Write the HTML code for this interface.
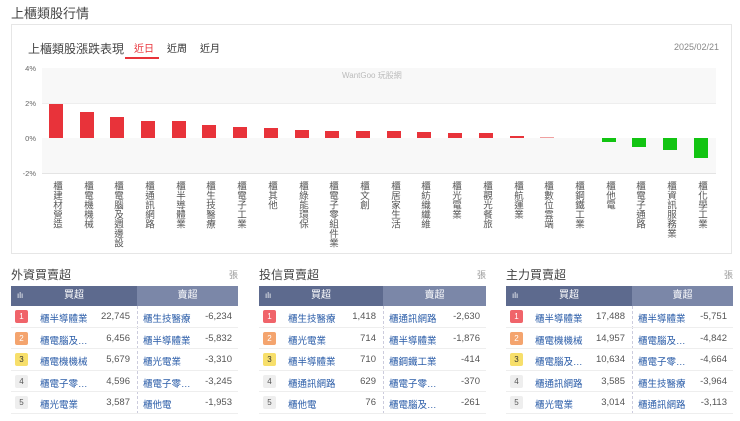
<!DOCTYPE html>
<html><head><meta charset="utf-8"><style>
*{margin:0;padding:0;box-sizing:border-box}
body{width:740px;height:421px;background:#fff;font-family:"Liberation Sans","Noto Sans CJK TC",sans-serif;color:#333;position:relative;overflow:hidden}
.a{position:absolute}
.bar{position:absolute;width:14px;background:#e8333a}
.g{background:#12c412}
.lb{position:absolute;top:181px;writing-mode:vertical-rl;font-size:9.5px;line-height:10px;color:#555;width:10px}
.yl{position:absolute;right:704px;font-size:7.5px;color:#666}
.tb{position:absolute;top:286px;width:227px;height:128px;font-size:9.5px}
.hd{position:absolute;top:0;height:20px;color:#fff;font-size:10px;line-height:20px;text-align:center}
.row{position:absolute;left:0;width:100%;height:21.5px;border-bottom:1px solid #eee}
.nb{position:absolute;left:4px;top:4px;width:13px;height:13px;font-size:8px;line-height:13px;text-align:center;color:#fff;border-radius:2px}
.n1{position:absolute;left:29px;top:5px;color:#2a5ca8}
.v1{position:absolute;right:108px;top:5px;color:#555;text-align:right}
.n2{position:absolute;left:132px;top:5px;color:#2a5ca8}
.v2{position:absolute;right:6px;top:5px;color:#555;text-align:right}
.tt{position:absolute;top:266px;font-size:12px;color:#444}
.zh{position:absolute;top:268px;font-size:9px;color:#999}
</style></head><body>
<div class="a" style="left:11px;top:3px;font-size:13px;color:#444">上櫃類股行情</div>
<div class="a" style="left:11px;top:24px;width:721px;height:230px;border:1px solid #e6e6e6"></div>
<div class="a" style="left:28px;top:40px;font-size:12px;color:#444">上櫃類股漲跌表現</div>
<div class="a" style="left:134px;top:40px;font-size:10px;color:#e8333a">近日</div>
<div class="a" style="left:125px;top:57px;width:34px;height:2px;background:#e8333a"></div>
<div class="a" style="left:167px;top:40px;font-size:10px;color:#333">近周</div>
<div class="a" style="left:200px;top:40px;font-size:10px;color:#333">近月</div>
<div class="a" style="left:674px;top:42px;font-size:9px;color:#888">2025/02/21</div>
<div class="a" style="left:42px;top:68px;width:674px;height:35px;background:#f8f8f8"></div>
<div class="a" style="left:42px;top:138px;width:674px;height:35px;background:#f8f8f8"></div>
<div class="a" style="left:42px;top:103px;width:674px;height:1px;background:#eee"></div>
<div class="a" style="left:42px;top:173px;width:674px;height:1px;background:#e4e4e4"></div>
<div class="a" style="left:342px;top:70px;font-size:8px;color:#bbb">WantGoo 玩股網</div>
<div class="yl" style="top:64px">4%</div>
<div class="yl" style="top:99px">2%</div>
<div class="yl" style="top:134px">0%</div>
<div class="yl" style="top:169px">-2%</div>
<div class="bar" style="left:49px;top:104px;height:34px"></div>
<div class="bar" style="left:80px;top:112px;height:26px"></div>
<div class="bar" style="left:110px;top:117px;height:21px"></div>
<div class="bar" style="left:141px;top:121px;height:17px"></div>
<div class="bar" style="left:172px;top:121px;height:17px"></div>
<div class="bar" style="left:202px;top:125px;height:13px"></div>
<div class="bar" style="left:233px;top:127px;height:11px"></div>
<div class="bar" style="left:264px;top:128px;height:10px"></div>
<div class="bar" style="left:295px;top:130px;height:8px"></div>
<div class="bar" style="left:325px;top:131px;height:7px"></div>
<div class="bar" style="left:356px;top:131px;height:7px"></div>
<div class="bar" style="left:387px;top:131px;height:7px"></div>
<div class="bar" style="left:417px;top:132px;height:6px"></div>
<div class="bar" style="left:448px;top:133px;height:5px"></div>
<div class="bar" style="left:479px;top:133px;height:5px"></div>
<div class="bar" style="left:510px;top:136px;height:2px"></div>
<div class="bar" style="left:540px;top:137px;height:1px;background:#f0a0a0"></div>
<div class="bar g" style="left:602px;top:138px;height:4px"></div>
<div class="bar g" style="left:632px;top:138px;height:9px"></div>
<div class="bar g" style="left:663px;top:138px;height:12px"></div>
<div class="bar g" style="left:694px;top:138px;height:20px"></div>
<div class="lb" style="left:51px">櫃建材營造</div>
<div class="lb" style="left:82px">櫃電機機械</div>
<div class="lb" style="left:112px">櫃電腦及週邊設</div>
<div class="lb" style="left:143px">櫃通訊網路</div>
<div class="lb" style="left:174px">櫃半導體業</div>
<div class="lb" style="left:204px">櫃生技醫療</div>
<div class="lb" style="left:235px">櫃電子工業</div>
<div class="lb" style="left:266px">櫃其他</div>
<div class="lb" style="left:297px">櫃綠能環保</div>
<div class="lb" style="left:327px">櫃電子零組件業</div>
<div class="lb" style="left:358px">櫃文創</div>
<div class="lb" style="left:389px">櫃居家生活</div>
<div class="lb" style="left:419px">櫃紡織纖維</div>
<div class="lb" style="left:450px">櫃光電業</div>
<div class="lb" style="left:481px">櫃觀光餐旅</div>
<div class="lb" style="left:512px">櫃航運業</div>
<div class="lb" style="left:542px">櫃數位雲端</div>
<div class="lb" style="left:573px">櫃鋼鐵工業</div>
<div class="lb" style="left:604px">櫃他電</div>
<div class="lb" style="left:634px">櫃電子通路</div>
<div class="lb" style="left:665px">櫃資訊服務業</div>
<div class="lb" style="left:696px">櫃化學工業</div>

<div class="tt" style="left:11px">外資買賣超</div><div class="zh" style="left:229px">張</div>
<div class="tt" style="left:259px">投信買賣超</div><div class="zh" style="left:477px">張</div>
<div class="tt" style="left:506px">主力買賣超</div><div class="zh" style="left:724px">張</div>

<div class="tb" style="left:11px">
<div class="hd" style="left:0;width:126px;background:#5d6a8e"><span style="position:absolute;left:6px;font-size:8px">ılı</span>買超</div>
<div class="hd" style="left:126px;width:101px;background:#7b87a8">賣超</div>
<div class="a" style="left:126px;top:20px;height:108px;border-left:1px dashed #ccd"></div>
<div class="row" style="top:20px"><span class="nb" style="background:#f0646a">1</span><span class="n1">櫃半導體業</span><span class="v1">22,745</span><span class="n2">櫃生技醫療</span><span class="v2">-6,234</span></div>
<div class="row" style="top:41.5px"><span class="nb" style="background:#f4a46e">2</span><span class="n1">櫃電腦及…</span><span class="v1">6,456</span><span class="n2">櫃半導體業</span><span class="v2">-5,832</span></div>
<div class="row" style="top:63px"><span class="nb" style="background:#f7df6b;color:#333">3</span><span class="n1">櫃電機機械</span><span class="v1">5,679</span><span class="n2">櫃光電業</span><span class="v2">-3,310</span></div>
<div class="row" style="top:84.5px"><span class="nb" style="background:#eee;color:#555">4</span><span class="n1">櫃電子零…</span><span class="v1">4,596</span><span class="n2">櫃電子零…</span><span class="v2">-3,245</span></div>
<div class="row" style="top:106px"><span class="nb" style="background:#eee;color:#555">5</span><span class="n1">櫃光電業</span><span class="v1">3,587</span><span class="n2">櫃他電</span><span class="v2">-1,953</span></div>
</div>

<div class="tb" style="left:259px">
<div class="hd" style="left:0;width:124px;background:#5d6a8e"><span style="position:absolute;left:6px;font-size:8px">ılı</span>買超</div>
<div class="hd" style="left:124px;width:103px;background:#7b87a8">賣超</div>
<div class="a" style="left:124px;top:20px;height:108px;border-left:1px dashed #ccd"></div>
<div class="row" style="top:20px"><span class="nb" style="background:#f0646a">1</span><span class="n1">櫃生技醫療</span><span class="v1" style="right:110px">1,418</span><span class="n2" style="left:130px">櫃通訊網路</span><span class="v2">-2,630</span></div>
<div class="row" style="top:41.5px"><span class="nb" style="background:#f4a46e">2</span><span class="n1">櫃光電業</span><span class="v1" style="right:110px">714</span><span class="n2" style="left:130px">櫃半導體業</span><span class="v2">-1,876</span></div>
<div class="row" style="top:63px"><span class="nb" style="background:#f7df6b;color:#333">3</span><span class="n1">櫃半導體業</span><span class="v1" style="right:110px">710</span><span class="n2" style="left:130px">櫃鋼鐵工業</span><span class="v2">-414</span></div>
<div class="row" style="top:84.5px"><span class="nb" style="background:#eee;color:#555">4</span><span class="n1">櫃通訊網路</span><span class="v1" style="right:110px">629</span><span class="n2" style="left:130px">櫃電子零…</span><span class="v2">-370</span></div>
<div class="row" style="top:106px"><span class="nb" style="background:#eee;color:#555">5</span><span class="n1">櫃他電</span><span class="v1" style="right:110px">76</span><span class="n2" style="left:130px">櫃電腦及…</span><span class="v2">-261</span></div>
</div>

<div class="tb" style="left:506px">
<div class="hd" style="left:0;width:126px;background:#5d6a8e"><span style="position:absolute;left:6px;font-size:8px">ılı</span>買超</div>
<div class="hd" style="left:126px;width:101px;background:#7b87a8">賣超</div>
<div class="a" style="left:126px;top:20px;height:108px;border-left:1px dashed #ccd"></div>
<div class="row" style="top:20px"><span class="nb" style="background:#f0646a">1</span><span class="n1">櫃半導體業</span><span class="v1">17,488</span><span class="n2">櫃半導體業</span><span class="v2">-5,751</span></div>
<div class="row" style="top:41.5px"><span class="nb" style="background:#f4a46e">2</span><span class="n1">櫃電機機械</span><span class="v1">14,957</span><span class="n2">櫃電腦及…</span><span class="v2">-4,842</span></div>
<div class="row" style="top:63px"><span class="nb" style="background:#f7df6b;color:#333">3</span><span class="n1">櫃電腦及…</span><span class="v1">10,634</span><span class="n2">櫃電子零…</span><span class="v2">-4,664</span></div>
<div class="row" style="top:84.5px"><span class="nb" style="background:#eee;color:#555">4</span><span class="n1">櫃通訊網路</span><span class="v1">3,585</span><span class="n2">櫃生技醫療</span><span class="v2">-3,964</span></div>
<div class="row" style="top:106px"><span class="nb" style="background:#eee;color:#555">5</span><span class="n1">櫃光電業</span><span class="v1">3,014</span><span class="n2">櫃通訊網路</span><span class="v2">-3,113</span></div>
</div>
</body></html>
